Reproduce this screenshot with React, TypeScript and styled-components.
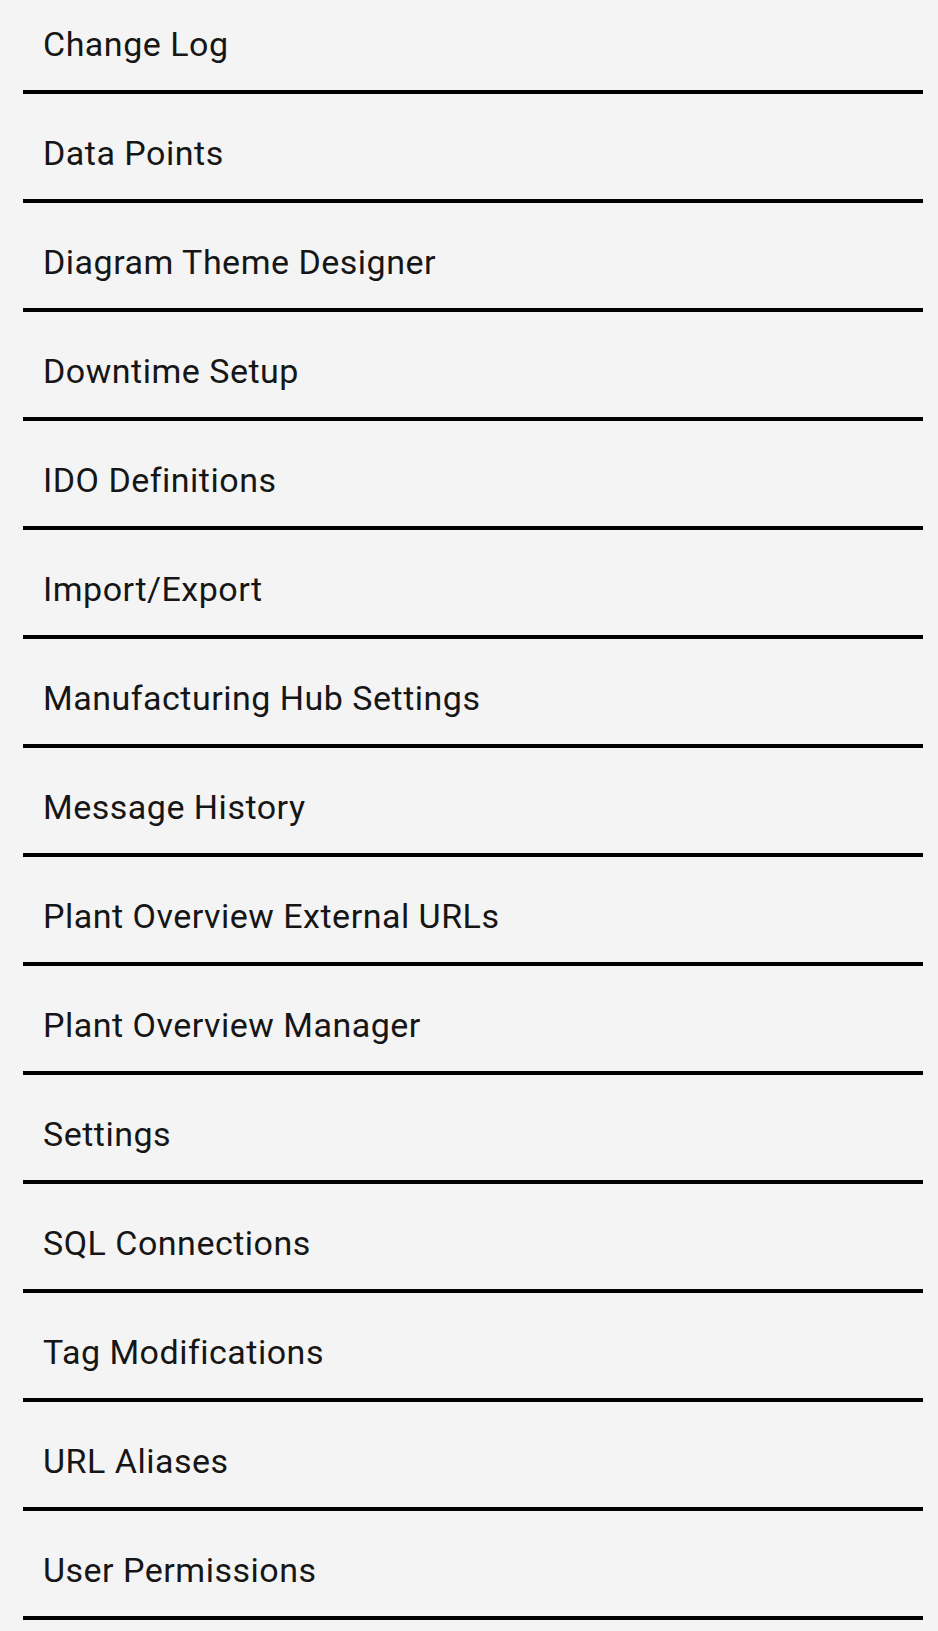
import React from "react";
import styled, { createGlobalStyle } from "styled-components";

const GlobalStyle = createGlobalStyle`
  html, body {
    margin: 0;
    padding: 0;
    background: #f4f4f4;
  }
  body {
    font-family: Roboto, "Noto Sans", "Liberation Sans", sans-serif;
    color: #111;
  }
`;

const Page = styled.div`
  padding: 0 15px 0 23px;
  overflow: hidden;
`;

const List = styled.ul`
  list-style: none;
  margin: -15px 0 0;
  padding: 0;
`;

const Item = styled.li`
  box-sizing: border-box;
  height: 109px;
  padding: 16px 0 4px 20px;
  display: flex;
  align-items: center;
  border-bottom: 4px solid #000;
`;

const Label = styled.span`
  font-size: 34px;
  font-weight: 400;
  line-height: 40px;
  letter-spacing: 0.5px;
  color: #161616;
`;

const items = [
  "Change Log",
  "Data Points",
  "Diagram Theme Designer",
  "Downtime Setup",
  "IDO Definitions",
  "Import/Export",
  "Manufacturing Hub Settings",
  "Message History",
  "Plant Overview External URLs",
  "Plant Overview Manager",
  "Settings",
  "SQL Connections",
  "Tag Modifications",
  "URL Aliases",
  "User Permissions",
];

export default function App() {
  return (
    <>
      <GlobalStyle />
      <Page>
        <List>
          {items.map((name) => (
            <Item key={name}>
              <Label>{name}</Label>
            </Item>
          ))}
        </List>
      </Page>
    </>
  );
}
